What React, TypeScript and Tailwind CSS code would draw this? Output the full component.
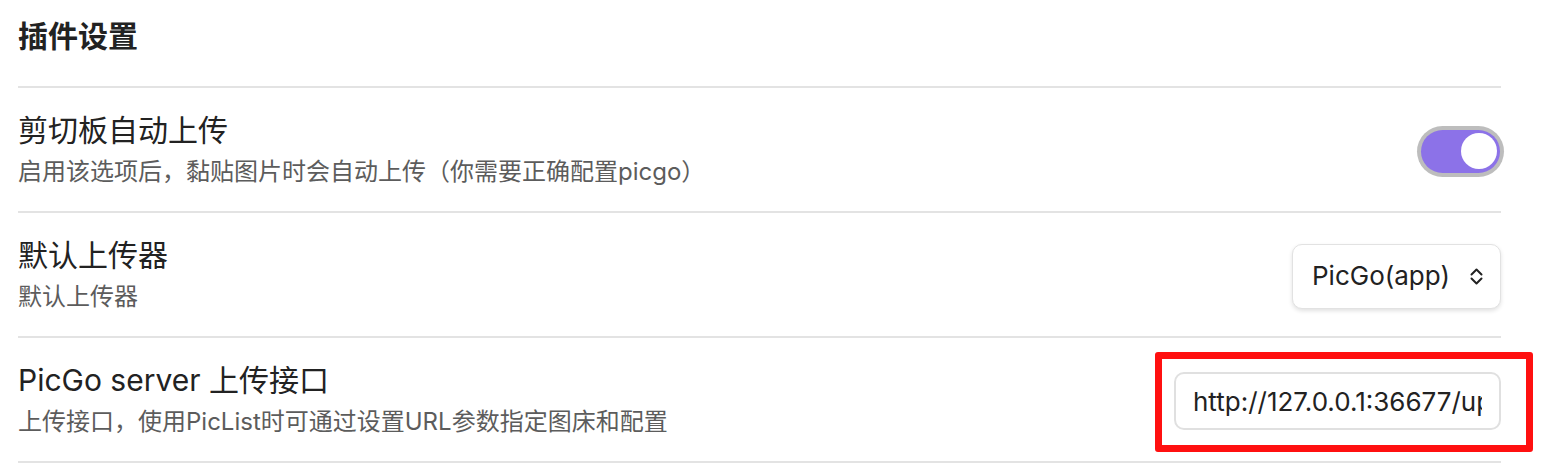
const font = "font-['Inter','Noto_Sans_CJK_SC',sans-serif]";

function Toggle() {
  return (
    <div className="-mr-[3px] h-[51px] w-[87px] rounded-full bg-[#bdbdbd] p-[4px]">
      <div className="flex h-full w-full items-center justify-end rounded-full bg-[#8c72e8] pr-[3px]">
        <div className="h-[36px] w-[36px] rounded-full bg-white" />
      </div>
    </div>
  );
}

function Select() {
  return (
    <div className="flex h-[65px] w-[209px] items-center justify-between rounded-[10px] border border-[#e2e2e2] bg-white pl-[19px] pr-[16px] shadow-[0_2px_4px_rgba(0,0,0,0.12)]">
      <span className="text-[26px] leading-none text-[#222]">PicGo(app)</span>
      <svg width="15" height="19" viewBox="0 0 15 19" fill="none" stroke="#222" strokeWidth="2" strokeLinecap="round" strokeLinejoin="round">
        <path d="M2.5 7.5 7.5 2.5l5 5" />
        <path d="M2.5 11.5l5 5 5-5" />
      </svg>
    </div>
  );
}

function UrlInput() {
  return (
    <div className="relative">
      <input
        readOnly
        value="http://127.0.0.1:36677/upload"
        className={`${font} h-[58px] w-[327px] rounded-[10px] border-2 border-[#e0e0e0] bg-white px-[17px] text-[26px] text-[#222] outline-none`}
      />
      <div className="pointer-events-none absolute -top-[20px] -left-[19px] -right-[32px] -bottom-[22px] rounded-[3px] border-[7px] border-[#ff1010]" />
    </div>
  );
}

function Row({ title, desc, control }: { title: string; desc: string; control: React.ReactNode }) {
  return (
    <div className="flex h-[125px] items-center border-b-2 border-[#e3e3e3] pt-[3px]">
      <div className="flex flex-col">
        <div className="text-[30px] leading-[40px] text-[#222]">{title}</div>
        <div className="mt-[2px] text-[24px] leading-[40px] text-[#5c5c5c]">{desc}</div>
      </div>
      <div className="ml-auto">{control}</div>
    </div>
  );
}

export default function App() {
  const rows = [
    {
      title: "剪切板自动上传",
      desc: "启用该选项后，黏贴图片时会自动上传（你需要正确配置picgo）",
      control: <Toggle />,
    },
    { title: "默认上传器", desc: "默认上传器", control: <Select /> },
    {
      title: "PicGo server 上传接口",
      desc: "上传接口，使用PicList时可通过设置URL参数指定图床和配置",
      control: <UrlInput />,
    },
  ];

  return (
    <div className={`${font} h-[466px] w-[1560px] overflow-hidden bg-white`}>
      <div className="ml-[18px] w-[1483px]">
        <div className="h-[88px] border-b-2 border-[#e3e3e3] pt-[18px]">
          <h2 className="text-[30px] font-bold leading-[36px] text-[#222]">插件设置</h2>
        </div>
        {rows.map((row, i) => (
          <Row key={i} title={row.title} desc={row.desc} control={row.control} />
        ))}
      </div>
    </div>
  );
}
